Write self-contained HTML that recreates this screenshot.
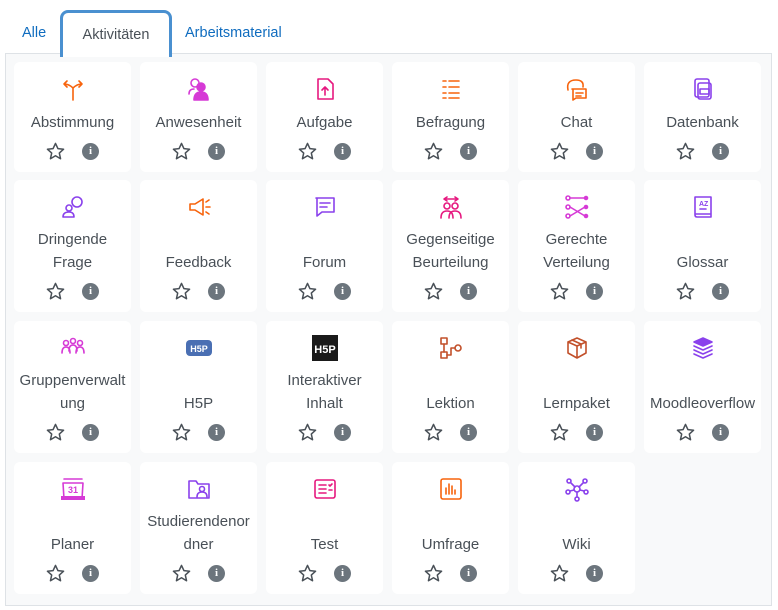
<!DOCTYPE html><html><head><style>
body{margin:0;background:#fff;font-family:"Liberation Sans",sans-serif;width:778px;height:610px;position:relative;overflow:hidden}
.tab{position:absolute;top:25px;font-size:14.5px;color:#0f6cbf}
.act{position:absolute;left:60px;top:10px;width:106px;height:44px;border:3px solid #4a90d0;border-bottom:none;border-radius:8px 8px 0 0;background:#fff;z-index:2;text-align:center;line-height:44px;font-size:14.5px;color:#495057}
.panel{position:absolute;left:5px;top:53px;width:765px;height:551px;border:1px solid #dee2e6;background:#f8f9fa}
.c{position:absolute;width:117px;background:#fff;border-radius:6px}
.c svg.i{position:absolute;left:46px;top:14px;width:26px;height:26px}
.l{position:absolute;left:0;right:0;bottom:38px;text-align:center;font-size:15px;line-height:23px;color:#495057}
.s{position:absolute;bottom:11px;left:32px;width:19px;height:19px}
.n{position:absolute;bottom:12px;left:68px;width:17px;height:17px;border-radius:50%;background:#6c757d;color:#fff;font-size:11px;font-weight:bold;text-align:center;line-height:17px;font-family:"Liberation Serif",serif}
</style></head><body>
<div class="tab" style="left:22px">Alle</div>
<div class="act">Aktivitäten</div>
<div class="tab" style="left:185px">Arbeitsmaterial</div>
<div class="panel"></div>
<div id="g"></div>
<script>
const cols=[14,140,266,392,518,644],rows=[[62,110],[180,132],[321,132],[462,132]];
const O='#f7630c',P='#d63ad6',M='#e6187f',V='#8a41ec',B='#4a6fb3';
const items=[
['Abstimmung',O,'<path d="M13 24V12M13 12Q9 8 4 8M13 12Q17 8 22 8M7 5L4 8L7 11M19 5L22 8L19 11" fill="none"/>'],
['Anwesenheit',P,'<circle cx="9" cy="7" r="4" fill="none"/><circle cx="15" cy="11" r="4"/><path d="M8 24Q8 16 15 16Q22 16 22 24Z"/><path d="M3 18Q3 13 8 13" fill="none"/>'],
['Aufgabe',M,'<path d="M6 3H16L21 8V23H6Z M13 19V11M10 14L13 11L16 14" fill="none"/>'],
['Befragung',O,'<path d="M5 5H8M5 11H8M5 17H8M5 22H8M11 5H21M11 11H21M11 17H21M11 22H21" fill="none"/>'],
['Chat',O,'<path d="M4 14Q2 4 12 4Q20 4 19 11M8 13H22V22H12L9 24V13" fill="none"/><path d="M12 17H19M12 20H17" fill="none"/>'],
['Datenbank',V,'<rect x="5" y="3" width="14" height="18" rx="2" fill="none"/><rect x="8" y="7" width="13" height="16" rx="2" fill="none"/><rect x="10" y="13" width="9" height="5" fill="none"/>'],
['Dringende<br>Frage',V,'<circle cx="17" cy="8" r="5" fill="none"/><circle cx="9" cy="14" r="3" fill="none"/><path d="M3 23Q3 18 9 18Q14 18 14 23Z" fill="none"/>'],
['Feedback',O,'<path d="M4 10H9L17 5V21L9 16H4Z M20 8L23 6M20 13H24M20 18L23 20" fill="none"/>'],
['Forum',V,'<path d="M4 4H22V18H10L5 22V4Z M8 9H18M8 13H15" fill="none"/>'],
['Gegenseitige<br>Beurteilung',M,'<path d="M6 5H20M9 3L6 5L9 7M17 3L20 5L17 7" fill="none"/><circle cx="9" cy="12" r="3" fill="none"/><circle cx="17" cy="12" r="3" fill="none"/><path d="M3 24Q3 17 9 17Q15 17 15 24M11 24Q11 17 17 17Q23 17 23 24" fill="none"/>'],
['Gerechte<br>Verteilung',P,'<circle cx="4" cy="4" r="2" fill="none"/><circle cx="4" cy="13" r="2" fill="none"/><circle cx="4" cy="22" r="2" fill="none"/><path d="M6 4H21M6 13L21 22M6 22L21 13" fill="none"/><circle cx="22" cy="4" r="1.5"/><circle cx="22" cy="13" r="1.5"/><circle cx="22" cy="22" r="1.5"/>'],
['Glossar',V,'<path d="M5 3H21V23H7Q5 23 5 21Z M5 20H21" fill="none"/><text x="9" y="12" font-size="7" stroke="none" fill="#8a41ec" font-family="Liberation Sans" font-weight="bold">AZ</text><path d="M10 15H16" fill="none"/>'],
['Gruppenverwalt<br>ung',P,'<circle cx="6" cy="8" r="2.5" fill="none"/><circle cx="13" cy="6" r="2.5" fill="none"/><circle cx="20" cy="8" r="2.5" fill="none"/><path d="M2 18Q2 12 6 12Q10 12 10 18M9 16Q9 10 13 10Q17 10 17 16M16 18Q16 12 20 12Q24 12 24 18" fill="none"/>'],
['H5P',B,'<rect x="0" y="5" width="26" height="16" rx="4" fill="#4a6fb3" stroke="none"/><text x="13" y="17" text-anchor="middle" font-size="9" font-weight="bold" fill="#fff" stroke="none" font-family="Liberation Sans">H5P</text>'],
['Interaktiver<br>Inhalt','#222','<rect x="-3" y="-2" width="32" height="30" fill="#1a1a1a" stroke="none"/><text x="13" y="18" text-anchor="middle" font-size="11" font-weight="bold" fill="#fff" stroke="none" font-family="Liberation Sans">H5P</text>'],
['Lektion','#c2502a','<rect x="3" y="3" width="6" height="6" fill="none"/><rect x="3" y="17" width="6" height="6" fill="none"/><circle cx="20" cy="13" r="3" fill="none"/><path d="M6 9V17M9 20H13V13H17" fill="none"/>'],
['Lernpaket','#c2502a','<path d="M13 3L22 7V18L13 23L4 18V7Z M4 7L13 11L22 7M13 11V23M8 5L17 9V13" fill="none"/>'],
['Moodleoverflow',V,'<path d="M4 7L13 3L22 7L13 11Z"/><path d="M4 11L13 15L22 11M4 15L13 19L22 15M4 19L13 23L22 19" fill="none"/>'],
['Planer',P,'<path d="M4 3H22M3 7H23L22 23H4Z" fill="none"/><rect x="1" y="20" width="24" height="4" fill="#d63ad6" stroke="none"/><text x="13" y="17" text-anchor="middle" font-size="9" font-weight="bold" fill="#d63ad6" stroke="none" font-family="Liberation Sans">31</text>'],
['Studierendenor<br>dner',V,'<path d="M3 5H10L12 8H23V22H3Z" fill="none"/><circle cx="16" cy="13" r="2.5" fill="none"/><path d="M11 21Q11 16 16 16Q21 16 21 21" fill="none"/>'],
['Test',M,'<rect x="3" y="4" width="20" height="18" rx="2" fill="none"/><path d="M7 9H14M7 13H14M7 17H14M17 9L18 10L20 8M17 14H20" fill="none"/>'],
['Umfrage',O,'<rect x="3" y="3" width="20" height="20" rx="2" fill="none"/><path d="M8 18V12M11 18V8M14 18V10M17 18V14" fill="none"/>'],
['Wiki',V,'<circle cx="13" cy="13" r="3" fill="none"/><circle cx="5" cy="5" r="2" fill="none"/><circle cx="21" cy="5" r="2" fill="none"/><circle cx="4" cy="16" r="2" fill="none"/><circle cx="22" cy="16" r="2" fill="none"/><circle cx="13" cy="23" r="2" fill="none"/><path d="M7 7L11 11M19 7L15 11M6 15L10 14M20 15L16 14M13 16V21" fill="none"/>']];
const star='<svg class="s" viewBox="0 0 20 20"><path d="M10 1.5L12.6 7L18.5 7.6L14 11.6L15.3 17.6L10 14.5L4.7 17.6L6 11.6L1.5 7.6L7.4 7Z" fill="none" stroke="#495057" stroke-width="1.6" stroke-linejoin="round"/></svg>';
let h='';
items.forEach((it,k)=>{const r=rows[Math.floor(k/6)],x=cols[k%6];
h+=`<div class="c" style="left:${x}px;top:${r[0]}px;height:${r[1]}px"><svg class="i" viewBox="0 0 26 26" fill="${it[1]}" stroke="${it[1]}" stroke-width="1.6" stroke-linecap="round" stroke-linejoin="round">${it[2]}</svg><div class="l">${it[0]}</div>${star}<div class="n">i</div></div>`});
document.getElementById('g').innerHTML=h;
</script>
</body></html>
